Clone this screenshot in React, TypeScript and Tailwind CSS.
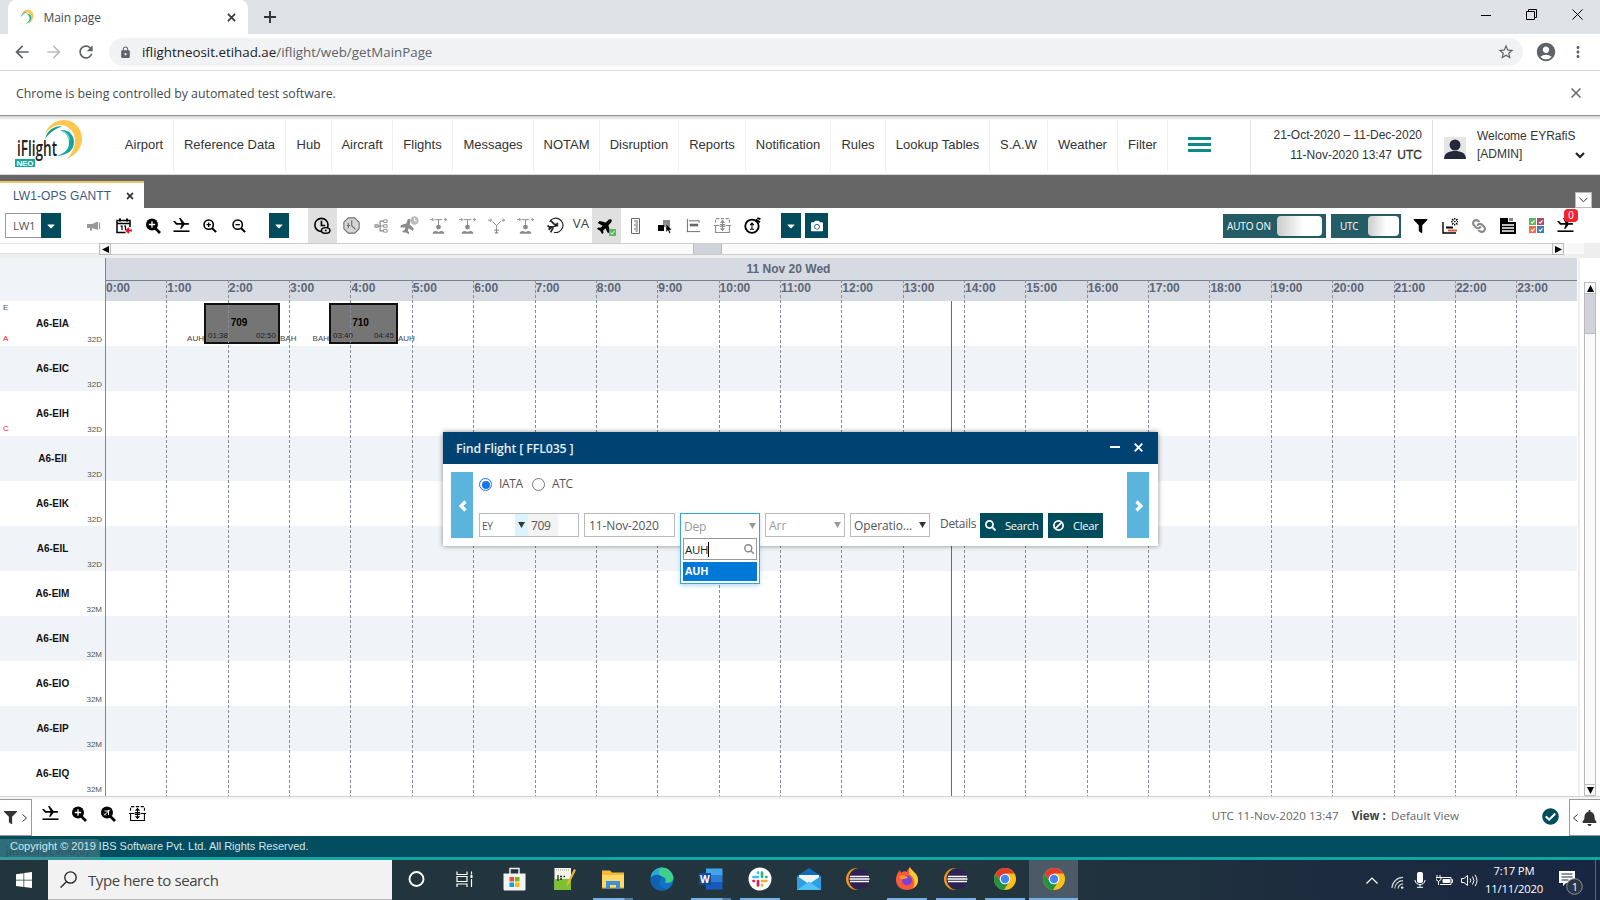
import React from 'react';
import { FaBell, FaCamera, FaCaretDown, FaCheckCircle, FaFilter, FaLink, FaPlane, FaSearch, FaTimes } from 'react-icons/fa';
import { MdLock, MdAccountCircle, MdStarBorder, MdMoreVert, MdArrowBack, MdArrowForward, MdRefresh } from 'react-icons/md';

const segoe = "font-['Open_Sans','Noto_Sans',sans-serif]";
const arial = "font-['Liberation_Sans',Arial,sans-serif]";

/* ---------- logos ---------- */

function Swirl({ className }: { className: string }) {
  return (
    <svg viewBox="0 0 40 40" className={className}>
      <path d="M3 14C8 3 18-2 27 3c11 6 12 23-6 36 6-9 9-17 5-25C21 5 12 7 3 14z" fill="#fdc74f" />
      <path d="M1 21C4 12 10 7 18 7 12 10 6 14 1 21z" fill="#1a9b92" />
      <path d="M15 11c9-2 17 6 13 16-3 6-8 9-14 10 7-4 11-8 11-14 0-6-4-10-10-12z" fill="#14a79d" />
    </svg>
  );
}

function Logo() {
  return (
    <svg viewBox="0 0 70 52" className="h-[52px] w-[70px]">
      <path d="M31 14C34 5 42 0 50 0c11 0 18 9 18 19 0 9-6 16-15 20 5-6 8-12 8-18C61 11 54 5 46 5c-6 0-11 4-15 9z" fill="#fdc74f" />
      <path d="M31 19C33 11 39 6 48 6 42 9 36 12 31 19z" fill="#1a9b92" />
      <path d="M46 10c9-1 14 5 14 12 0 8-6 13-17 14 8-3 12-7 12-13 0-6-3-10-9-13z" fill="#14a79d" />
      <path d="M46 10c6 1 10 5 10 11-2-5-5-9-10-11z" fill="#8fe0d0" />
      <text x="3" y="36" fontFamily="Open Sans" fontSize="21" fontWeight="600" fill="#222" textLength="40" lengthAdjust="spacingAndGlyphs">iFlight</text>
      <rect x="1" y="39" width="20" height="8" fill="#14a79d" />
      <text x="2.500" y="46" fontFamily="Liberation Sans" fontSize="8" fontWeight="700" fill="#fff" textLength="17">NEO</text>
    </svg>
  );
}

/* ---------- toolbar glyphs ---------- */

const S = ({ children, className = 'h-4 w-4', box = '0 0 16 16' }: { children: React.ReactNode; className?: string; box?: string }) => (
  <svg viewBox={box} className={className} fill="none" stroke="currentColor" strokeWidth="1.5">{children}</svg>
);

const Megaphone = () => (
  <S box="0 0 14 10" className="h-[10px] w-[14px]">
    <path d="M0 3h5l6-2.500v8.500L5 7v2.500H3V7H0z" fill="currentColor" stroke="none" /><path d="M12.500 1.500v6.500" strokeWidth="1.200" />
  </S>
);
const Calendar = () => (
  <S className="h-4 w-4">
    <path d="M9.500 14.500H1v-12h13v6.500M1 5.500h13" />
    <path d="M4 .5v3M11 .5v3" strokeWidth="2" />
    <path d="M4.500 8H6v4M8 8h1.500v4" strokeWidth="1.200" />
    <path d="M16 12.500h-5m2-2.500l-2.500 2.500L13 15" stroke="#e0142c" strokeWidth="1.800" />
  </S>
);
const ZoomSolid = ({ glyph }: { glyph: 'plus' | 'plane' }) => (
  <S>
    <circle cx="7" cy="6.500" r="6" fill="currentColor" stroke="none" />
    <path d="M10.500 10.500l4.500 4.500" strokeWidth="2.600" />
    {glyph === 'plus'
      ? <path d="M7 3.300v6.400M3.800 6.500h6.400" stroke="#fff" strokeWidth="1.300" />
      : <path d="M4.200 9.300L9.800 3.700M4.500 5h5M8.500 4v5M4 7.500l2 2" stroke="#fff" strokeWidth="1" />}
  </S>
);
const Zoom = ({ plus }: { plus: boolean }) => (
  <S className="h-[14px] w-[14px]">
    <circle cx="6.5" cy="6.5" r="5.3" strokeWidth="1.8" />
    <path d="M10.500 10.500l4.500 4.500" strokeWidth="2.400" />
    <path d={plus ? 'M4 6.5h5M6.5 4v5' : 'M4 6.5h5'} />
  </S>
);
const PlaneLine = () => (
  <S box="0 0 17 15" className="h-[15px] w-[17px]">
    <path d="M.5 13.200h16" strokeWidth="1.600" />
    <path d="M0 3l2 0 2 2h4.500L6 0h1.600l4 5H15c1.300 0 1.800 1.600 0 1.800h-3.500L8.500 10.800H7l1.600-4H3z" fill="currentColor" stroke="none" />
  </S>
);
const ClockEye = () => (
  <S className="h-[17px] w-[17px]">
    <circle cx="7" cy="7.500" r="6.200" strokeWidth="1.500" />
    <path d="M7 3.500v4.500h3.500" />
    <ellipse cx="11" cy="12.600" rx="4" ry="2.600" fill="#e0e0e0" strokeWidth="1.400" />
    <circle cx="11" cy="12.600" r=".9" fill="currentColor" stroke="none" />
  </S>
);
const GrayClock = () => (
  <S className="h-[17px] w-[17px]">
    <path d="M5 .8h6L15.200 5v6L11 15.200H5L.8 11V5z" fill="#d5d5d5" strokeWidth="1" />
    <path d="M8.200 3v5.200l3.500 3.500M5 5.500v5M3.500 8h3" strokeWidth="1.100" />
  </S>
);
const Tree = () => (
  <S className="h-[14px] w-[14px]">
    <path d="M1 8h6M11 2.500H7v11h4M7 8h4" strokeWidth="1.300" />
    <path d="M11 1h4v3h-4zM11 6.500h4v3h-4zM11 12h4v3h-4zM1 6.500h4v3H1z" strokeWidth="1" />
  </S>
);
const PlaneClock = () => (
  <span className="relative flex h-4 w-4">
    <FaPlane className="absolute -left-0.5 top-px h-[14px] w-[15px] -rotate-[75deg]" />
    <svg viewBox="0 0 10 10" className="absolute -right-px -top-0.5 h-[9px] w-[9px]">
      <circle cx="5" cy="5" r="4.600" fill="#bbb" /><path d="M5 2v3.400h2.500" stroke="#fff" fill="none" />
    </svg>
  </span>
);
const Hub = () => (
  <S className="h-[17px] w-[17px]">
    <path d="M0 2.500h3M4.500 2.500h7M13 2.500h3M2 1l1.500 1.500L2 4M14 1l1.500 1.500L14 4M8 2.500v6" strokeWidth=".9" />
    <circle cx="8" cy="9.500" r="2.300" fill="currentColor" stroke="none" />
    <path d="M2.500 15.800c0-3 3-3.300 5.500-1.800 2.500-1.500 5.500-1.200 5.500 1.800z" fill="currentColor" stroke="none" />
  </S>
);
const Fork = () => (
  <S className="h-[17px] w-[17px]">
    <path d="M0 3h3M2 1.500L3.500 3 2 4.500M4 4l4 4 4-4M13 3h3M14 1.500L15.500 3 14 4.500M8 8v2" strokeWidth=".9" />
    <path d="M8 10v5.500M5.700 12.500h4.600M6.500 15h3" strokeWidth="1.100" />
  </S>
);
const PlaneOrbit = () => (
  <S className="h-[17px] w-[17px]">
    <path d="M2.500 4.500a6.700 6.700 0 1 1 4 9.800" strokeWidth="1.100" />
    <path d="M3.500 3.500l4 4 3-1.500M.5 8l1.800 1.500L10.500 8M6 9.500l-2.500 5M4.500 9.300L1.500 12" strokeWidth="1.600" />
  </S>
);
const PlaneCheck = () => (
  <span className="relative flex h-4 w-4">
    <FaPlane className="absolute -left-0.5 top-0 h-[15px] w-[17px] -rotate-45" />
    <svg viewBox="0 0 8 8" className="absolute -bottom-[2px] -right-[1px] h-[7px] w-[7px]">
      <rect width="8" height="8" fill="#5cb85c" /><path d="M1.500 4l1.800 2 3.200-4" stroke="#fff" fill="none" />
    </svg>
  </span>
);
const Ruler = () => (
  <S box="0 0 9 16" className="h-4 w-[9px]"><path d="M.5.5h8v15h-8zM3 3h4M4.500 5h2.500M3 7h4M4.500 9h2.500M3 11h4M4.500 13h2.500" strokeWidth="1" /></S>
);
const Squares = () => (
  <S>
    <path d="M6 2h7v7H6z" fill="#8a8a8a" stroke="none" /><path d="M1 7h6v6H1z" fill="currentColor" stroke="none" />
    <path d="M9 5.500v8.700l2-1.700 1.300 3 1.500-.7-1.300-2.800h2.500z" fill="currentColor" stroke="#fff" strokeWidth=".5" />
  </S>
);
const Bars = () => (
  <S className="h-[15px] w-[15px]"><path d="M1.500 1v14M1 14.500h14M3 3h11v2" strokeWidth="1" /><path d="M4 7.500h9" strokeWidth="2.800" /></S>
);
const SplitBox = () => (
  <S className="h-[17px] w-[17px]">
    <path d="M1.500 5.500v-4h13v4" strokeWidth="1" strokeDasharray="3 1.500" /><path d="M1.500 8v6.500h13V8M0 8h5M11 8h5M5.500 7.200h5M5.500 8.800h5" strokeWidth="1" />
    <path d="M8 2.500l2.500 3h-5zM8 13.500l2.500-3h-5z" fill="currentColor" stroke="none" /><path d="M8 4v8" strokeWidth="1" />
  </S>
);
const Stopwatch = () => (
  <S className="h-[17px] w-[17px]">
    <circle cx="7.500" cy="8.700" r="6.300" strokeWidth="1.700" /><path d="M7.500 12V6M5.700 7.700l1.800-2 1.800 2M5.500 11.500h4" strokeWidth="1" /><path d="M11 2.500l4 2.500M12.500 1l3 1" strokeWidth="1.800" />
  </S>
);
const ChartStar = () => (
  <S>
    <path d="M1 4v11h13" strokeWidth="1.400" /><path d="M4 9.500h7" strokeWidth="2" /><path d="M6 12.500h9" stroke="#d9603b" strokeWidth="2" />
    <path d="M10 1l1.500 1.500M15.500 1L14 2.500M10 6.500L11.500 5M15.500 6.500L14 5M12.700 0v1.500M12.700 6v1.500M9 3.700h1.500M15 3.700h1M12 3.700h1.500" strokeWidth="1.300" />
  </S>
);
const Doc = () => (
  <S><path d="M0 0h8v4h8v12H0z" fill="currentColor" stroke="none" /><path d="M9 0h4v3H9z" fill="#888" stroke="none" /><path d="M2 7h12M2 10h12M2 13h12" stroke="#fff" strokeWidth="1.300" /></S>
);
const CheckGrid = () => (
  <S className="h-[15px] w-[15px]">
    <g stroke="none"><path d="M0 0h7.500v7.500H0z" fill="#5cb85c" /><path d="M8.500 0H16v7.500H8.500z" fill="#b5476a" /><path d="M0 8.500h7.500V16H0z" fill="#f0694a" /><path d="M8.500 8.500H16V16H8.500z" fill="#3f7cb8" /></g>
    <path d="M2 4l1.500 1.500 2.500-3M10.500 4L12 5.500l2.500-3M2 12.500L3.500 14 6 11M10.500 12.500L12 14l2.500-3" stroke="#fff" strokeWidth="1.100" />
  </S>
);

const Slot = ({ w, children, tone = 'text-black', bg = '' }: { w: string; children?: React.ReactNode; tone?: string; bg?: string }) => (
  <div className={`flex h-[35px] shrink-0 items-center justify-center ${w} ${tone} ${bg}`}>{children}</div>
);
const Drop = () => (
  <button className="flex h-[25px] w-5 shrink-0 items-center justify-center bg-[#004c5c] text-white"><FaCaretDown className="h-3 w-3" /></button>
);

/* ---------- browser chrome ---------- */

function Chrome() {
  return (
    <div className={`${segoe} shrink-0`}>
      <div className="flex h-[34px] items-start bg-[#dee1e6]">
        <div className="ml-2 flex h-[34px] w-[240px] items-center rounded-t-lg bg-white pl-3">
          <Swirl className="h-4 w-4" />
          <span className="ml-2 w-[190px] pt-px text-[12px] tracking-[-0.1px] text-[#45494d]">Main page</span>
          <svg viewBox="0 0 10 10" className="mr-3 h-[9px] w-[9px] shrink-0" stroke="#33363a" strokeWidth="1.800"><path d="M1 1l8 8M9 1L1 9" /></svg>
        </div>
        <svg viewBox="0 0 12 12" className="ml-4 mt-[11px] h-3 w-3" stroke="#333" strokeWidth="1.900"><path d="M6 0v12M0 6h12" /></svg>
        <div className="ml-auto mr-[17px] mt-[9px] flex items-center gap-[35px]">
          <svg viewBox="0 0 10 10" className="h-2.5 w-2.5" stroke="#000"><path d="M0 5.500h10" /></svg>
          <svg viewBox="0 0 11 11" className="h-[11px] w-[11px]" fill="none" stroke="#000"><path d="M.5 2.500h8v8h-8zM2.500 2.500v-2h8v8h-2" /></svg>
          <svg viewBox="0 0 11 11" className="h-[11px] w-[11px]" stroke="#000"><path d="M.5.5l10 10M10.500.5l-10 10" /></svg>
        </div>
      </div>
      <div className="flex h-[37px] items-center border-b border-[#d9dbde] bg-white text-[#5f6368]">
        <MdArrowBack className="ml-3 h-[20px] w-[20px]" />
        <MdArrowForward className="ml-3 h-[20px] w-[20px] text-[#bbbdc0]" />
        <MdRefresh className="ml-3 h-[20px] w-[20px]" />
        <div className="ml-[13px] flex h-7 w-[1414px] items-center rounded-full bg-[#f0f2f4] pl-2.5">
          <MdLock className="h-[13px] w-[13px]" />
          <span className="ml-[10px] pt-px text-[13.350px] text-[#5f6368]"><span className="text-[#202124]">iflightneosit.etihad.ae</span>/iflight/web/getMainPage</span>
          <MdStarBorder className="ml-auto mr-2 h-[18px] w-[18px]" />
        </div>
        <MdAccountCircle className="ml-3 h-[22px] w-[22px]" />
        <MdMoreVert className="ml-3 h-[18px] w-[18px]" />
      </div>
      <div className="flex h-[44px] items-center justify-between bg-white px-4">
        <span className="pt-0.5 text-[12.330px] text-[#45494d]">Chrome is being controlled by automated test software.</span>
        <svg viewBox="0 0 10 10" className="mr-[3px] h-2.5 w-2.5" stroke="#666" strokeWidth="1.500"><path d="M.5.5l9 9M9.500.5l-9 9" /></svg>
      </div>
      <div className="h-[5px] bg-[linear-gradient(to_bottom,#8f9595_0_1px,#cfcfcf_1px,#ffffff)]" />
    </div>
  );
}

/* ---------- application header ---------- */

const menu: [string, string][] = [
  ['Airport', 'w-[59px]'], ['Reference Data', 'w-[112px]'], ['Hub', 'w-[46px]'], ['Aircraft', 'w-[61px]'], ['Flights', 'w-[60px]'],
  ['Messages', 'w-[81px]'], ['NOTAM', 'w-[66px]'], ['Disruption', 'w-[79px]'], ['Reports', 'w-[67px]'], ['Notification', 'w-[85px]'],
  ['Rules', 'w-[55px]'], ['Lookup Tables', 'w-[104px]'], ['S.A.W', 'w-[58px]'], ['Weather', 'w-[70px]'], ['Filter', 'w-[50px]'],
];

function Header() {
  return (
    <header className={`${arial} flex h-[55px] shrink-0 border-b border-[#d8d8d8] bg-white text-[13px] text-[#333]`}>
      <div className="w-[115px] shrink-0 pl-3.5"><Logo /></div>
      {menu.map(([name, w]) => (
        <div key={name} className={`flex h-[51px] shrink-0 items-center justify-center whitespace-nowrap border-r border-[#f0f0f0] pb-[2px] ${w}`}>{name}</div>
      ))}
      <div className="flex w-[83px] shrink-0 flex-col gap-[3px] border-r border-[#e4e4e4] pl-5 pt-[17px]">
        <i className="h-[3px] w-[23px] bg-[#0d8a86]" /><i className="h-[3px] w-[23px] bg-[#0d8a86]" /><i className="h-[3px] w-[23px] bg-[#0d8a86]" />
      </div>
      <div className="w-[182px] shrink-0 border-r border-[#ddd] pr-[10px] pt-[5px] text-right text-[12px] leading-[20px] text-[#333]">
        <div className="whitespace-nowrap">21-Oct-2020 – 11-Dec-2020</div>
        <div className="whitespace-nowrap">11-Nov-2020 13:47 <span className="ml-0.5 [-webkit-text-stroke:0.3px_#333]">UTC</span></div>
      </div>
      <div className="flex flex-1 pl-[11px] pt-[8px]">
        <svg viewBox="0 0 22 22" className="mt-[9px] h-[22px] w-[22px]"><rect width="22" height="22" fill="#e6e6e6" /><circle cx="11" cy="8" r="5.500" fill="#26273a" /><path d="M0 22c0-6 5-8 11-8s11 2 11 8z" fill="#26273a" /></svg>
        <div className="ml-[11px] whitespace-nowrap text-[12px] leading-[17.500px] text-[#333]">
          <div>Welcome EYRafiS</div>
          <div>[ADMIN]</div>
        </div>
        <svg viewBox="0 0 10 7" className="mt-[24px] h-[7px] w-[10px]" fill="none" stroke="#222" strokeWidth="2.200"><path d="M1 1l4 4 4-4" /></svg>
      </div>
    </header>
  );
}

function TabStrip() {
  return (
    <div className={`${arial} flex h-[33px] shrink-0 items-end justify-between bg-[#666]`}>
      <div className="flex h-[27px] w-36 items-center border-t-2 border-[#f0c766] bg-white pl-[13px] text-[12px] text-[#3b5a80]">
        <span className="w-[97px] whitespace-nowrap pt-px tracking-[0.080px]">LW1-OPS GANTT</span>
        <FaTimes className="ml-[15px] h-[10px] w-[10px] text-[#333]" />
      </div>
      <div className="mr-2 flex h-4 w-[17px] items-center justify-center border border-[#bbb] bg-white">
        <svg viewBox="0 0 10 6" className="h-1.5 w-[9px]" fill="none" stroke="#222"><path d="M.5.5L5 5 9.500.5" /></svg>
      </div>
    </div>
  );
}

function Toolbar() {
  const gray = 'text-[#8a8a8a]';
  return (
    <div className={`${segoe} flex h-[35px] shrink-0 items-center bg-white`}>
      <div className="ml-[5px] flex h-[25px] w-[56px] shrink-0 border border-[#999] pl-[7px] text-[11.500px] leading-[23px] text-[#555]">
        <span className="w-[28px] shrink-0 tracking-[-0.3px]">LW1</span>
        <span className="-my-px flex h-[25px] w-5 shrink-0 items-center justify-center bg-[#004c5c] text-white"><FaCaretDown className="h-3 w-3" /></span>
      </div>
      <Slot w="ml-[18px] w-[30px]" tone="text-[#999]"><Megaphone /></Slot>
      <Slot w="w-[29px]"><Calendar /></Slot>
      <Slot w="w-[30px]"><ZoomSolid glyph="plus" /></Slot>
      <Slot w="w-[27px]"><PlaneLine /></Slot>
      <Slot w="w-[29px]"><Zoom plus /></Slot>
      <Slot w="mr-4 w-[29px]"><Zoom plus={false} /></Slot>
      <Drop />
      <Slot w="ml-[19px] w-[29px]" bg="bg-[#e0e0e0]"><ClockEye /></Slot>
      <Slot w="w-[29px]" tone="text-[#707070]"><GrayClock /></Slot>
      <Slot w="w-[29px]" tone={gray}><Tree /></Slot>
      <Slot w="w-[29px]" tone={gray}><PlaneClock /></Slot>
      <Slot w="w-[28px]" tone={gray}><Hub /></Slot>
      <Slot w="w-[30px]" tone={gray}><Hub /></Slot>
      <Slot w="w-[28px]" tone={gray}><Fork /></Slot>
      <Slot w="w-[30px]" tone={gray}><Hub /></Slot>
      <Slot w="w-[31px]" tone="text-[#222]"><PlaneOrbit /></Slot>
      <Slot w="w-[20px]" tone="text-[#444]"><span className="pb-1 text-[13.300px]">VA</span></Slot>
      <Slot w="ml-px w-[29px]" bg="bg-[#e0e0e0]"><PlaneCheck /></Slot>
      <Slot w="w-[29px]" tone="text-[#666]"><Ruler /></Slot>
      <Slot w="w-[29px]"><Squares /></Slot>
      <Slot w="w-[29px]" tone="text-[#666]"><Bars /></Slot>
      <Slot w="w-[29px]" tone={gray}><SplitBox /></Slot>
      <Slot w="mr-[14px] w-[30px]"><Stopwatch /></Slot>
      <Drop />
      <button className="ml-1 flex h-[25px] w-[23px] shrink-0 items-center justify-center bg-[#004c5c] text-white"><FaCamera className="h-3 w-3" /></button>
      <div className="ml-auto mt-[1px] flex h-6 w-[103px] shrink-0 items-center justify-between border-2 border-[#245c66] bg-[#245c66] pl-0.5 text-[10px] text-white">
        <span className="tracking-[-0.150px]">AUTO ON</span><i className="mr-0.5 h-5 w-[45px] rounded-sm bg-[linear-gradient(to_right,#ccc,#fff_60%)]" />
      </div>
      <div className="ml-[5px] mt-[1px] flex h-6 w-[70px] shrink-0 items-center justify-between border-2 border-[#245c66] bg-[#245c66] pl-[7px] text-[10px] text-white">
        <span className="tracking-[-0.3px]">UTC</span><i className="h-5 w-[31px] rounded-sm bg-[linear-gradient(to_right,#ccc,#fff_60%)]" />
      </div>
      <Slot w="ml-[5px] w-[29px]"><FaFilter className="h-[14px] w-[15px]" /></Slot>
      <Slot w="w-[29px]"><ChartStar /></Slot>
      <Slot w="w-[30px]" tone={gray}><FaLink className="h-[14px] w-[14px] rotate-90" /></Slot>
      <Slot w="w-[28px]"><Doc /></Slot>
      <Slot w="w-[29px]"><CheckGrid /></Slot>
      <Slot w="mr-5 w-[29px]">
        <span className="relative">
          <PlaneLine />
          <b className={`${arial} absolute -top-[9px] left-[7px] h-[13px] w-[14px] rounded bg-[#f5222d] text-center text-[10px] font-normal leading-[13px] text-white`}>0</b>
        </span>
      </Slot>
    </div>
  );
}

/* ---------- gantt ---------- */

const hours = Array.from({ length: 24 }, (_, i) => `${i}:00`);
const aircraft = [
  { reg: 'A6-EIA', type: '32D', top: 'E', mark: 'A' }, { reg: 'A6-EIC', type: '32D' }, { reg: 'A6-EIH', type: '32D', mark: 'C' },
  { reg: 'A6-EII', type: '32D' }, { reg: 'A6-EIK', type: '32D' }, { reg: 'A6-EIL', type: '32D' }, { reg: 'A6-EIM', type: '32M' },
  { reg: 'A6-EIN', type: '32M' }, { reg: 'A6-EIO', type: '32M' }, { reg: 'A6-EIP', type: '32M' }, { reg: 'A6-EIQ', type: '32M' },
];

function Flight({ place, no, from, to, dep, arr }: { place: string; no: string; from: string; to: string; dep: string; arr: string }) {
  return (
    <div className={`absolute top-[2px] flex h-[41px] flex-col border-2 border-[#111] bg-[#757575] text-[8px] leading-[9px] text-[#222] ${place}`}>
      <div className="mt-[11px] pr-[6px] text-center text-[10px] font-bold leading-[14px] text-black">{no}</div>
      <div className="flex justify-between px-0.5 pt-[1px]"><span>{dep}</span><span>{arr}</span></div>
      <span className="absolute -bottom-px right-full mr-[2px] text-[#444]">{from}</span>
      <span className="absolute -bottom-px left-full ml-[2px] text-[#444]">{to}</span>
    </div>
  );
}

function Gantt() {
  return (
    <div className={`${arial} relative h-[553px] shrink-0 bg-white`}>
      <div className="flex h-[15px] bg-[#eee]">
        <div className="h-[11px] w-[99px] border-y border-[#e2e2e2] bg-white" />
        <div className="flex h-3 w-3 items-center justify-center border border-[#bbb] bg-[#f5f5f5]"><svg viewBox="0 0 6 6" className="h-[7px] w-[7px]"><path d="M6 0v6L0 3z" /></svg></div>
        <div className="flex h-3 w-[1441px] border-y border-[#ccc] bg-[#fafafa]"><i className="ml-[582px] h-full w-[29px] border-x border-[#bbb] bg-[#d0d3d9]" /></div>
        <div className="flex h-3 w-3 items-center justify-center border border-[#bbb] bg-[#f5f5f5]"><svg viewBox="0 0 6 6" className="h-[7px] w-[7px]"><path d="M0 0v6l6-3z" /></svg></div>
        <div className="h-[11px] w-5 bg-[#f8f8f8]" />
      </div>
      <div className="flex h-[538px]">
        <div className="w-[106px] shrink-0 border-r border-[#7b8696]">
          <div className="h-[43px] bg-[#f0f4f8]" />
          {aircraft.map((a, i) => (
            <div key={a.reg} className={`relative flex h-[45px] items-center justify-center pb-[1px] text-[10px] font-bold text-[#111] ${i % 2 ? 'bg-[#f0f4f8]' : 'bg-white'}`}>
              {a.reg}
              <span className="absolute bottom-[2px] right-[3px] text-[8px] font-normal leading-[9px] text-[#555]">{a.type}</span>
              {a.top && <span className="absolute left-[3px] top-[2px] text-[8px] font-normal leading-[9px] text-[#555]">{a.top}</span>}
              {a.mark && <span className="absolute bottom-[3px] left-[3px] text-[8px] font-normal leading-[9px] text-[#f22]">{a.mark}</span>}
            </div>
          ))}
        </div>
        <div className="relative w-[1471px] shrink-0">
          <div className="h-[22px] bg-[#d5dae3] pr-[106px] text-center text-[12px] font-bold leading-[23px] text-[#5d6677]">11 Nov 20 Wed</div>
          <div className="h-[21px] border-t border-[#76808f] bg-[#d5dae3]" />
          <div className="relative">
            {aircraft.map((a, i) => <div key={a.reg} className={`h-[45px] ${i % 2 ? 'bg-[#f0f4f8]' : 'bg-white'}`} />)}
            <Flight place="left-[98px] w-[76px]" no="709" from="AUH" to="BAH" dep="01:38" arr="02:50" />
            <Flight place="left-[223px] w-[69px]" no="710" from="BAH" to="AUH" dep="03:40" arr="04:45" />
            <i className="absolute left-[845px] top-0 h-full w-px bg-[#e8324a]" />
          </div>
          <div className="pointer-events-none absolute -left-px bottom-0 top-[22px] grid w-[1472.600px] grid-cols-24 text-[12px] font-bold leading-[17px] text-[#5d6677]">
            {hours.map((h, i) => (
              <div key={h} className="flex">
                <i className={i ? 'h-full w-px bg-[repeating-linear-gradient(to_bottom,#868d99_0_3px,transparent_3px_5px)]' : 'h-full w-px'} />
                <span>{h}</span>
              </div>
            ))}
          </div>
        </div>
        <div className="w-[3px] border-r-2 border-[#eee]" />
        <div className="ml-1 mt-6 flex w-3 flex-col border border-[#bbb] bg-[#fafafa]">
          <div className="flex h-[11px] items-center justify-center border-b border-[#bbb]"><svg viewBox="0 0 6 6" className="h-[7px] w-[7px]"><path d="M3 0l3 6H0z" /></svg></div>
          <div className="h-10 border-b border-[#bbb] bg-[#d0d3d9]" />
          <div className="mt-auto flex h-[11px] items-center justify-center border-t border-[#bbb]"><svg viewBox="0 0 6 6" className="h-[7px] w-[7px]"><path d="M3 6l3-6H0z" /></svg></div>
        </div>
      </div>
    </div>
  );
}

/* ---------- find flight dialog ---------- */

const Field = ({ className, children }: { className: string; children: React.ReactNode }) => (
  <div className={`flex h-6 shrink-0 items-center border text-[12px] leading-[24px] ${className}`}>{children}</div>
);
const Tri = ({ className }: { className: string }) => (
  <svg viewBox="0 0 8 7" className={`h-1.5 w-[7px] shrink-0 ${className}`}><path d="M0 0h8L4 7z" fill="currentColor" /></svg>
);
const Arrow = ({ d }: { d: string }) => (
  <svg viewBox="0 0 9 12" className="h-3 w-[9px]" fill="none" stroke="currentColor" strokeWidth="3.200"><path d={d} /></svg>
);

function FindFlight() {
  return (
    <div className={`${segoe} absolute left-[443px] top-[432px] h-[114px] w-[715px] bg-white text-[#555] shadow-[0_0_5px_rgba(0,0,0,0.45)]`}>
      <div className="flex h-8 items-center bg-[#004372] pl-[13px] text-[12.300px] font-semibold text-white">
        <span className="flex-1 pt-0.5 tracking-[-0.120px] text-[#e8f0f6]">Find Flight [ FFL035 ]</span>
        <i className="mb-[3px] mr-[14px] h-0.5 w-2.5 bg-white" />
        <svg viewBox="0 0 9 9" className="mr-[15px] mb-px h-[9px] w-[9px]" stroke="#fff" strokeWidth="1.900"><path d="M.7.7l7.600 7.600M8.300.7L.7 8.300" /></svg>
      </div>
      <div className="flex pl-2 pt-2">
        <button className="flex h-[66px] w-[22px] shrink-0 items-center justify-center bg-[#5ab4dc] pt-0.5 text-white"><Arrow d="M7.500 1.500L3 6l4.500 4.500" /></button>
        <div className="ml-1.5 w-[648px] shrink-0">
          <div className="flex h-[25px] items-center text-[12px]">
            <i className="flex h-[13px] w-[13px] items-center justify-center rounded-full border border-[#1a73e8]"><i className="h-2 w-2 rounded-full bg-[#1a73e8]" /></i>
            <span className="ml-[7px] w-[33px] pb-px tracking-[-0.350px]">IATA</span>
            <i className="h-[13px] w-[13px] rounded-full border border-[#777]" />
            <span className="ml-[7px] pb-px tracking-[-0.350px]">ATC</span>
          </div>
          <div className="mt-4 flex items-start">
            <Field className="w-[100px] border-[#bbb]">
              <span className="w-[35px] pl-[2px] pt-px text-[10px] tracking-[-0.2px]">EY</span>
              <span className="flex h-full w-[13px] items-center justify-center bg-[#dcf3fb]"><Tri className="text-[#333]" /></span>
              <span className="flex h-full w-[30px] items-center bg-[#f3f3f3] pl-[3px] pt-px tracking-[-0.3px]">709</span>
            </Field>
            <Field className="ml-[5px] w-[91px] border-[#bbb] pl-[4px] pt-0.5"><span className="tracking-[-0.120px]">11-Nov-2020</span></Field>
            <div className="relative ml-[5px] h-6 w-20 shrink-0">
              <div className="absolute inset-x-0 top-0 h-[71px] border border-[#3ba3d8] bg-white px-0.5 text-[12px] shadow-[0_2px_4px_rgba(60,160,210,0.35)]">
                <div className="flex h-6 items-center justify-between pl-px pr-[1px] pt-px tracking-[-0.2px] text-[#999]">Dep<Tri className="mb-0.5 text-[#999]" /></div>
                <div className="flex h-[22px] items-center border border-[#999] pl-[1px] text-[#222]">
                  <span className="pt-px text-[11.500px] tracking-[-0.350px]">AUH</span><i className="h-[15px] w-px bg-black" />
                  <svg viewBox="0 0 10 10" className="ml-auto mr-[2px] h-[10px] w-[10px]" fill="none" stroke="#888" strokeWidth="1.400"><circle cx="4.300" cy="4.300" r="3.500" /><path d="M7 7l2.700 2.700" /></svg>
                </div>
                <div className="mt-0.5 flex h-[19px] items-center bg-[#0078d7] pl-0.5 text-[10.800px] font-bold tracking-[-0.150px] text-white">AUH</div>
              </div>
            </div>
            <Field className="ml-[5px] w-20 justify-between border-[#bbb] pl-[3px] pr-[3px] text-[#999]"><span className="pt-0.5">Arr</span><Tri className="text-[#999]" /></Field>
            <Field className="ml-[5px] w-20 justify-between border-[#bbb] pl-[3px] pr-[3px]"><span className="pt-0.5 tracking-[-0.080px]">Operatio...</span><Tri className="text-[#333]" /></Field>
            <span className="ml-2.5 w-10 text-[12px] leading-[21px] tracking-[-0.300px]">Details</span>
            <button className="flex h-[25px] w-[63px] items-center bg-[#004c5c] pl-[5px] text-[11.200px] text-white"><FaSearch className="mr-[9px] h-[11px] w-[11px]" /><span className="pt-px tracking-[-0.300px]">Search</span></button>
            <button className="ml-[5px] flex h-[25px] w-[55px] items-center bg-[#004c5c] pl-[5px] text-[11.200px] text-white">
              <svg viewBox="0 0 12 12" className="mr-[9px] h-[11px] w-[11px]" fill="none" stroke="#fff" strokeWidth="1.900"><circle cx="6" cy="6" r="5" /><path d="M2.500 9.500l7-7" /></svg>
              <span className="pt-px tracking-[-0.300px]">Clear</span>
            </button>
          </div>
        </div>
        <button className="flex h-[66px] w-[22px] shrink-0 items-center justify-center bg-[#5ab4dc] pl-0.5 pt-0.5 text-white"><Arrow d="M1.500 1.500L6 6l-4.500 4.500" /></button>
      </div>
    </div>
  );
}

/* ---------- footer and taskbar ---------- */

function Footer() {
  return (
    <div className={`${segoe} shrink-0`}>
      <div className="flex h-[40px] border-t border-[#d5d5d5] bg-white pt-0.5 text-[11.650px] text-[#666] shadow-[inset_0_2px_2px_#f2f2f2]">
        <div className="flex h-[37px] w-8 shrink-0 items-center border border-l-0 border-[#999] pl-1 text-[#333]">
          <FaFilter className="h-[13px] w-[13px]" />
          <svg viewBox="0 0 5 8" className="ml-[5px] h-2 w-[5px]" fill="none" stroke="#333"><path d="M.5.5L4.500 4l-4 3.500" /></svg>
        </div>
        <div className="ml-[9px] flex h-[29px] items-center text-black">
          <Slot w="w-[18px]"><PlaneLine /></Slot>
          <Slot w="ml-[12px] w-4"><ZoomSolid glyph="plus" /></Slot>
          <Slot w="ml-[13px] w-4"><ZoomSolid glyph="plane" /></Slot>
          <Slot w="ml-[12px] w-[18px]"><SplitBox /></Slot>
        </div>
        <div className="ml-auto flex h-[34px] items-center whitespace-nowrap">
          <span>UTC 11-Nov-2020 13:47</span>
          <b className="ml-[13px] font-bold text-[#444]">View :</b>
          <span className="ml-[5px]">Default View</span>
          <FaCheckCircle className="ml-[83px] mr-[10px] h-[17px] w-[17px] text-[#004c5c]" />
        </div>
        <div className="flex h-[37px] w-[31px] shrink-0 items-center border border-r-0 border-[#999] pl-[3px]">
          <svg viewBox="0 0 5 8" className="mr-[4px] h-2 w-[5px]" fill="none" stroke="#333"><path d="M4.500.5L.5 4l4 3.500" /></svg>
          <FaBell className="h-[16px] w-[15px] text-[#333]" />
        </div>
      </div>
      <div className={`${arial} relative flex h-6 items-center border-b-[3px] border-[#12a5a2] bg-[#024e60] pl-2.5 text-[11px] text-[#d5e4e8]`}>
        <div className="absolute bottom-[-3px] left-0 h-[21px] w-[100px] rounded-tr bg-[#5e8b96]/50 pl-1.5 pt-[5px] text-[11px] font-normal leading-[14px] text-[#2c5865]">javascript:void(0)</div>
        <span className="relative whitespace-nowrap">Copyright © 2019 IBS Software Pvt. Ltd. All Rights Reserved.</span>
      </div>
    </div>
  );
}

const I = ({ children }: { children: React.ReactNode }) => <svg viewBox="0 0 24 24" className="h-6 w-6">{children}</svg>;
const Eclipse = () => (
  <I><circle cx="11" cy="12" r="11" fill="#f7941e" /><circle cx="13.500" cy="12" r="11" fill="#24323c" /><circle cx="13.500" cy="12" r="10" fill="#2c2255" /><path d="M4 9.500h19M3.500 12h20M4 14.500h19" stroke="#fff" strokeWidth="1.300" /></I>
);
const ChromeIcon = () => (
  <I>
    <circle cx="12" cy="12" r="11" fill="#fbc116" />
    <path d="M2.500 6.500A11 11 0 0 0 11 23l5.500-9H7.500z" fill="#229342" />
    <path d="M2.500 6.500a11 11 0 0 1 19 0H12v5z" fill="#e33b2e" />
    <path d="M2.500 6.500L7.500 14l4.500-7.500z" fill="#e33b2e" />
    <circle cx="12" cy="12" r="5.300" fill="#fff" /><circle cx="12" cy="12" r="4.200" fill="#4285f4" />
  </I>
);

function Task({ children, bar = '', bg = '' }: { children: React.ReactNode; bar?: string; bg?: string }) {
  return (
    <div className={`flex h-10 w-[49px] shrink-0 flex-col items-center ${bg}`}>
      <div className="flex h-[38px] items-center">{children}</div>
      <i className={`h-0.5 ${bar}`} />
    </div>
  );
}

function Taskbar() {
  const on = 'w-10 bg-[#76b0e8]';
  return (
    <div className={`${segoe} flex h-10 shrink-0 items-center bg-[linear-gradient(to_right,#22343c_0%,#23363f_60%,#1c2b3e_85%,#182642_100%)] text-white`}>
      <div className="flex w-12 justify-center"><svg viewBox="0 0 16 16" className="h-4 w-4" fill="#fff"><path d="M0 2.200L7.500 1.200v6.500H0zM8.200 1.100L16 0v7.700H8.200zM0 8.400h7.500v6.500L0 13.900zM8.200 8.400H16V16l-7.800-1.100z" /></svg></div>
      <div className="flex h-10 w-[344px] items-center border-b border-[#bbb] bg-[#f2f2f2] text-[15px] text-[#444]">
        <svg viewBox="0 0 17 17" className="ml-3 h-[17px] w-[17px]" fill="none" stroke="#222" strokeWidth="1.300"><circle cx="10.500" cy="6.500" r="5.700" /><path d="M6.500 10.700L.6 16.500" /></svg>
        <span className="ml-[11px] pt-0.5 tracking-[-0.400px]">Type here to search</span>
      </div>
      <Task><I><circle cx="11.500" cy="12" r="7" fill="none" stroke="#fff" strokeWidth="1.900" /></I></Task>
      <Task><I><path d="M3 4.500v3h10v-3M3 20v-3h10v3M3 9.500h10v5H3zM17.500 4.500v3M17.500 12v8" fill="none" stroke="#fff" strokeWidth="1.200" /><path d="M16.500 8h2v3h-2z" fill="#fff" /></I></Task>
      <Task><I><path d="M7 7V1.500h9V7" fill="none" stroke="#eee" strokeWidth="1.500" /><path d="M.5 6.500h22V22c0 1-.5 1.500-1.500 1.500H2C1 23.500.5 23 .5 22z" fill="#f4f4f4" /><path d="M6.500 10H11v4.500H6.500z" fill="#f25022" /><path d="M12 10h4.500v4.500H12z" fill="#7fba00" /><path d="M6.500 15.500H11V20H6.500z" fill="#00a4ef" /><path d="M12 15.500h4.500V20H12z" fill="#ffb900" /></I></Task>
      <Task><I><path d="M2.500 1h16.500v22H2.500z" fill="#f4f6e8" /><path d="M2.500 12H19v11H2.500z" fill="#7cc22e" /><path d="M4 3h13" stroke="#999" strokeDasharray="1 1" /><path d="M6 8v6M8 9.500h2M11.500 9.500h1.500M8 12h2" stroke="#222" strokeWidth="1.300" /><path d="M22 2l-7 14-1 3 3-2 7-14z" fill="#e8b43a" /></I></Task>
      <Task bar="w-10 bg-[linear-gradient(to_right,#76b0e8_31px,#4c7ba5_32px)]"><I><path d="M1 3.500h8l2 2h12v16H1z" fill="#f5b93a" /><path d="M1 8h22v12H1z" fill="#ffd869" /><path d="M5 22v-8h14v8h-4v-4H9v4z" fill="#3b8fdd" /></I></Task>
      <Task><I><circle cx="12" cy="12" r="11.500" fill="#1272c4" /><path d="M1 9C4-2 20-3 23.400 10c.6 5-4.400 7-8.400 5.500 2-2.500 0-6-4-6S2 11 1 9z" fill="#3fd08a" /><path d="M1 10C3 3 9 .5 12 .5c-4 2-4 6-1 9C6 8 2 10 1 14z" fill="#2aa7dc" /><path d="M.7 11c3-5 11-4 12 .5-2-1-4.500 2-3 6 1 3 5 5 9 4C9 27-1.500 19 .7 11z" fill="#0f62b0" /></I></Task>
      <Task bar="w-10 bg-[linear-gradient(to_right,#76b0e8_31px,#4c7ba5_32px)]"><I><path d="M7 1.500h16.500v7H7z" fill="#41a5ee" /><path d="M7 8h16.500v7H7z" fill="#2b7cd3" /><path d="M7 15h16.500v7.500H7z" fill="#185abd" /><path d="M0 6h12v12H0z" fill="#124a9e" /><text x="1" y="15.500" fontFamily="Open Sans" fontSize="10" fontWeight="700" fill="#fff">W</text></I></Task>
      <Task bar={on}><I><circle cx="12" cy="12" r="11.500" fill="#fff" /><g strokeWidth="2.700" strokeLinecap="round"><path d="M10 5.500V6M5.500 10H10" stroke="#36c5f0" /><path d="M14 5.500V10M18.500 10h-.5" stroke="#2eb67d" /><path d="M14 18.500V18M18.500 14H14" stroke="#ecb22e" /><path d="M10 18.500V14M5.500 14h.5" stroke="#e01e5a" /></g></I></Task>
      <Task><I><path d="M0 9L12 1l12 8v14H0z" fill="#0f6cbd" /><path d="M2 8h20v9H2z" fill="#f2f2f2" /><path d="M0 9l12 8 12-8v14H0z" fill="#2ba0e8" /><path d="M0 23l12-8.500L24 23z" fill="#53c3f5" /></I></Task>
      <Task><Eclipse /></Task>
      <Task bar={on}><I><path d="M1 13C1 8 3 5 5 3l1 3c2-2 5-2 6-1 0-2 2-4 3-5 1 4 8 6 8 13 0 6-5 10-11 10S1 19 1 13z" fill="#ff5a36" /><path d="M15 0c1 4 8 6 8 13 0 4-2 7-5 8 3-5 1-11-4-14 0-3 0-5 1-7z" fill="#ffc933" /><circle cx="12" cy="13.500" r="5" fill="#7a42d6" /><path d="M4 10c4-3 8-1 9 1-3 0-4 2-7 1z" fill="#ff9b2e" /></I></Task>
      <Task bar={on}><Eclipse /></Task>
      <Task bar={on}><ChromeIcon /></Task>
      <Task bg="bg-[#4b5a66]" bar="w-full bg-[#76b0e8]"><ChromeIcon /></Task>
      <div className="ml-auto flex h-10 items-center">
        <svg viewBox="0 0 12 7" className="h-[7px] w-3" fill="none" stroke="#fff" strokeWidth="1.200"><path d="M.5 6.500L6 1l5.500 5.500" /></svg>
        <svg viewBox="0 0 14 14" className="ml-[13px] mt-1 h-[13px] w-[13px]" fill="none" stroke="#cfd6dc" strokeWidth="1.200"><path d="M1 13A12 12 0 0 1 13 1.500M4 13.500A9 9 0 0 1 13 5M7.500 13.500A6 6 0 0 1 13 8.500" /><circle cx="12" cy="12.500" r="1.300" fill="#fff" stroke="none" /></svg>
        <svg viewBox="0 0 12 16" className="ml-[10px] h-4 w-3" fill="#fff"><rect x="3" width="6" height="11" rx="2" /><path d="M1 8c0 6 10 6 10 0M6 12v3M3 15.300h6" fill="none" stroke="#fff" /></svg>
        <svg viewBox="0 0 17 12" className="ml-[10px] h-3 w-[17px]" fill="none" stroke="#fff"><path d="M5 3.500h10v7H4M15.500 5.500h1v3h-1" /><path d="M7 5.500h6.500v3H7z" fill="#fff" /><path d="M1 1v2M4 1v2M0 3.500h5v2L2.500 7.500 0 5.500zM2.500 7.500V11" /></svg>
        <svg viewBox="0 0 17 13" className="ml-[8px] h-[13px] w-[17px]" fill="none" stroke="#fff"><path d="M.5 4.500h2.500l3.500-3v10L3 8.500H.5zM9 4.500q1.500 2 0 4M11.500 2.500q3 4 0 8M14 .8q4 5.700 0 11.400" /></svg>
        <div className="ml-[6px] w-[60px] text-center text-[11.300px] leading-[18px] tracking-[-0.200px]"><div>7:17 PM</div><div>11/11/2020</div></div>
        <svg viewBox="0 0 25 24" className="ml-[14px] mr-[12px] mt-1.5 h-6 w-[25px]"><path d="M1 0h16v12H8l-3 3v-3H1z" fill="#fff" /><path d="M3.500 3h11M3.500 6h11M3.500 9h7" stroke="#1b2a42" /><circle cx="16.500" cy="15.500" r="7.800" fill="#2c3440" stroke="#8a929a" /><text x="13.700" y="19.500" fontFamily="Open Sans" fontSize="11" fill="#fff">1</text></svg>
        <i className="mr-1 h-10 w-px bg-[#5d6777]" />
      </div>
    </div>
  );
}

export default function App() {
  return (
    <div className="relative flex h-[900px] w-[1600px] flex-col overflow-hidden bg-white">
      <Chrome />
      <Header />
      <TabStrip />
      <Toolbar />
      <Gantt />
      <Footer />
      <Taskbar />
      <FindFlight />
    </div>
  );
}
